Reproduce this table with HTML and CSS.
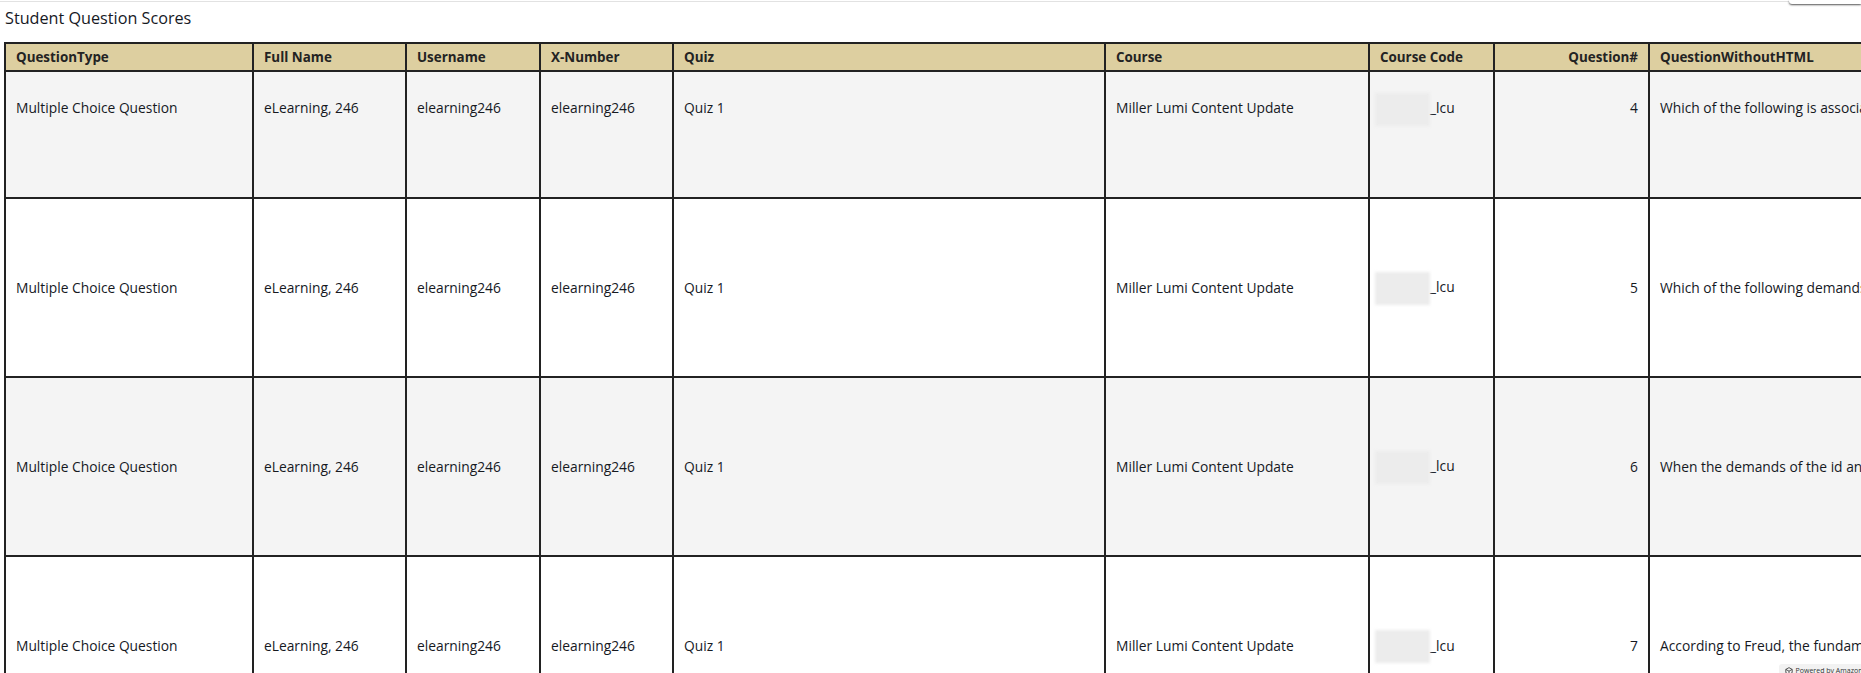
FILE: index.html
```html
<!DOCTYPE html>
<html lang="en">
<head>
<meta charset="utf-8">
<title>Student Question Scores</title>
<link rel="stylesheet" href="styles.css">
</head>
<body>
<div class="page">
  <div class="top-menu"></div>
  <h1 class="title">Student Question Scores</h1>
  <div class="table-wrap">
    <table class="grid">
      <colgroup>
        <col class="c-type"><col class="c-name"><col class="c-user"><col class="c-xnum"><col class="c-quiz"><col class="c-course"><col class="c-code"><col class="c-qnum"><col class="c-qtext">
      </colgroup>
      <thead>
        <tr>
          <th>QuestionType</th>
          <th>Full Name</th>
          <th>Username</th>
          <th>X-Number</th>
          <th>Quiz</th>
          <th>Course</th>
          <th>Course Code</th>
          <th class="num">Question#</th>
          <th>QuestionWithoutHTML</th>
        </tr>
      </thead>
      <tbody>
        <tr class="row first odd">
          <td>Multiple Choice Question</td>
          <td>eLearning, 246</td>
          <td>elearning246</td>
          <td>elearning246</td>
          <td>Quiz 1</td>
          <td>Miller Lumi Content Update</td>
          <td class="code"><span class="redact"></span>_lcu</td>
          <td class="num">4</td>
          <td class="qtext">Which of the following is associated with the id?</td>
        </tr>
        <tr class="row">
          <td>Multiple Choice Question</td>
          <td>eLearning, 246</td>
          <td>elearning246</td>
          <td>elearning246</td>
          <td>Quiz 1</td>
          <td>Miller Lumi Content Update</td>
          <td class="code"><span class="redact"></span>_lcu</td>
          <td class="num">5</td>
          <td class="qtext">Which of the following demands are made by the superego?</td>
        </tr>
        <tr class="row odd">
          <td>Multiple Choice Question</td>
          <td>eLearning, 246</td>
          <td>elearning246</td>
          <td>elearning246</td>
          <td>Quiz 1</td>
          <td>Miller Lumi Content Update</td>
          <td class="code"><span class="redact"></span>_lcu</td>
          <td class="num">6</td>
          <td class="qtext">When the demands of the id and superego conflict</td>
        </tr>
        <tr class="row">
          <td>Multiple Choice Question</td>
          <td>eLearning, 246</td>
          <td>elearning246</td>
          <td>elearning246</td>
          <td>Quiz 1</td>
          <td>Miller Lumi Content Update</td>
          <td class="code"><span class="redact"></span>_lcu</td>
          <td class="num">7</td>
          <td class="qtext">According to Freud, the fundamental source of motivation</td>
        </tr>
      </tbody>
    </table>
  </div>
  <div class="powered">
    <svg class="cube" viewBox="0 0 10 10" width="8" height="8" aria-hidden="true">
      <path d="M5 0.8 L9 3 L9 7 L5 9.2 L1 7 L1 3 Z M1 3 L5 5.2 L9 3 M5 5.2 L5 9.2" fill="none" stroke="#333" stroke-width="1"/>
    </svg>
    <span>Powered by Amazon QuickSight</span>
  </div>
</div>
</body>
</html>
```

FILE: styles.css
```css
html, body {
  margin: 0;
  padding: 0;
  background: #ffffff;
  overflow: hidden;
  height: 673px;
}

.page {
  position: relative;
  height: 672px;
  border-top: 1px solid #e2e2e2;
  margin-top: 1px;
  font-family: "Open Sans", "Noto Sans", "Liberation Sans", sans-serif;
  color: #16191f;
}

.top-menu {
  position: absolute;
  top: -2px;
  right: 0;
  width: 72px;
  height: 4px;
  border-radius: 0 0 0 3px;
  background: #fff;
  box-shadow: 0 1px 2px #555555;
}

.title {
  margin: 0;
  padding: 5px 5px 0 5px;
  height: 40px;
  box-sizing: border-box;
  font-size: 16.2px;
  font-weight: 400;
  line-height: 22px;
  color: #16191f;
}

.table-wrap {
  padding-left: 4px;
}

.grid {
  border-collapse: collapse;
  table-layout: fixed;
  width: 2060px;
  font-size: 13.8px;
  line-height: 20px;
}

.c-type { width: 248px; }
.c-name { width: 153px; }
.c-user { width: 134px; }
.c-xnum { width: 133px; }
.c-quiz { width: 432px; }
.c-course { width: 264px; }
.c-code { width: 125px; }
.c-qnum { width: 155px; }
.c-qtext { width: 416px; }

.grid th,
.grid td {
  border: 2px solid #222222;
  text-align: left;
  white-space: nowrap;
  overflow: hidden;
}

.grid th {
  background: #ddcfa0;
  height: 26px;
  padding: 0 10px;
  font-weight: 700;
  font-size: 13.4px;
  color: #232323;
}

.grid td {
  padding: 0 10px;
  height: 177.2px;
  vertical-align: middle;
  color: #16191f;
}

.grid .row.odd td {
  background: #f4f4f4;
}

.grid .row.first td {
  height: 99px;
  vertical-align: top;
  padding-top: 26px;
}

.grid .num {
  text-align: right;
}

.grid td.code {
  padding-left: 5px;
}

.redact {
  display: inline-block;
  width: 55px;
  height: 33px;
  margin: -7px 0;
  vertical-align: middle;
  background: #ececec;
  filter: blur(1.5px);
}

.grid td.qtext {
  padding-left: 10px;
}

.powered {
  position: absolute;
  right: -44px;
  bottom: -4px;
  display: flex;
  align-items: center;
  gap: 3px;
  padding: 2px 6px;
  background: #f2f2f2;
  border-radius: 3px 0 0 0;
  font-size: 7px;
  line-height: 10px;
  color: #333;
}
```
